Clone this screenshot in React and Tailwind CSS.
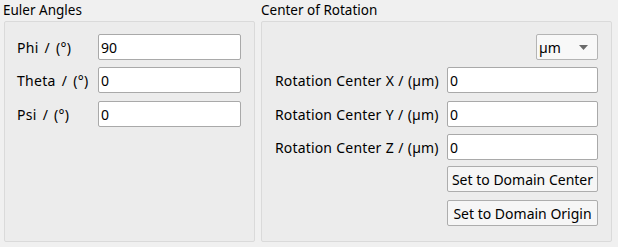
import React from 'react'

const font = { fontFamily: '"Noto Sans", "Liberation Sans", sans-serif' }

const Field = ({ value, className = '' }) => (
  <div className={`h-[26px] bg-white border border-[#a9a9a9] rounded-[2px] flex items-center pl-[2px] text-[14px] text-black ${className}`}>
    {value}
  </div>
)

const Btn = ({ children, className = '' }) => (
  <div className={`h-[26px] bg-[#f6f6f6] border border-[#adadad] rounded-[2px] flex items-center justify-center text-[14px] text-black ${className}`}>
    {children}
  </div>
)

export default function App() {
  return (
    <div className="w-[618px] h-[247px] bg-[#f0f0f0] flex text-black overflow-hidden" style={font}>
      {/* left group */}
      <div className="w-[251px] ml-[3px] flex flex-col">
        <div className="h-[22px] text-[13.5px] leading-[22px] -mt-[1px]">Euler Angles</div>
        <div className="ml-[1px] w-[251px] h-[221px] border border-[#dadada] rounded-[2px] bg-[#ececec] pt-[12px] pl-[12px] pr-[13px]">
          <div className="grid grid-cols-[81px_143px] items-center text-[14px]">
            <div className="tracking-[0.3px] [word-spacing:2px]">Phi / (°)</div>
            <Field value="90" />
            <div className="mt-[7px] tracking-[0.3px] [word-spacing:2px]">Theta / (°)</div>
            <Field value="0" className="mt-[7px]" />
            <div className="mt-[8px] tracking-[0.3px] [word-spacing:2px]">Psi / (°)</div>
            <Field value="0" className="mt-[8px]" />
          </div>
        </div>
      </div>

      {/* right group */}
      <div className="w-[351px] ml-[7px] flex flex-col">
        <div className="h-[22px] text-[13.5px] leading-[22px] -mt-[1px]">Center of Rotation</div>
        <div className="w-[351px] h-[221px] border border-[#dadada] rounded-[2px] bg-[#ececec] pt-[12px] pl-[13px] pr-[13px]">
          <div className="grid grid-cols-[172px_151px] items-center text-[14px]">
            <div />
            <div className="flex justify-end">
              <div className="w-[62px] h-[26px] bg-[#f8f8f8] border border-[#b4b4b4] rounded-[2px] flex items-center pl-[2px]">
                <span className="flex-1">µm</span>
                <svg width="9" height="5" viewBox="0 0 9 5" className="mr-[9px]">
                  <path d="M0 0 L9 0 L4.5 5 Z" fill="#6a6a6a" />
                </svg>
              </div>
            </div>
            <div className="mt-[7px] tracking-[0.15px] [word-spacing:0.5px]">Rotation Center X / (µm)</div>
            <Field value="0" className="mt-[7px]" />
            <div className="mt-[8px] tracking-[0.15px] [word-spacing:0.5px]">Rotation Center Y / (µm)</div>
            <Field value="0" className="mt-[8px]" />
            <div className="mt-[7px] tracking-[0.15px] [word-spacing:0.5px]">Rotation Center Z / (µm)</div>
            <Field value="0" className="mt-[7px]" />
            <div />
            <Btn className="mt-[6px]">Set to Domain Center</Btn>
            <div />
            <Btn className="mt-[8px]">Set to Domain Origin</Btn>
          </div>
        </div>
      </div>
    </div>
  )
}
